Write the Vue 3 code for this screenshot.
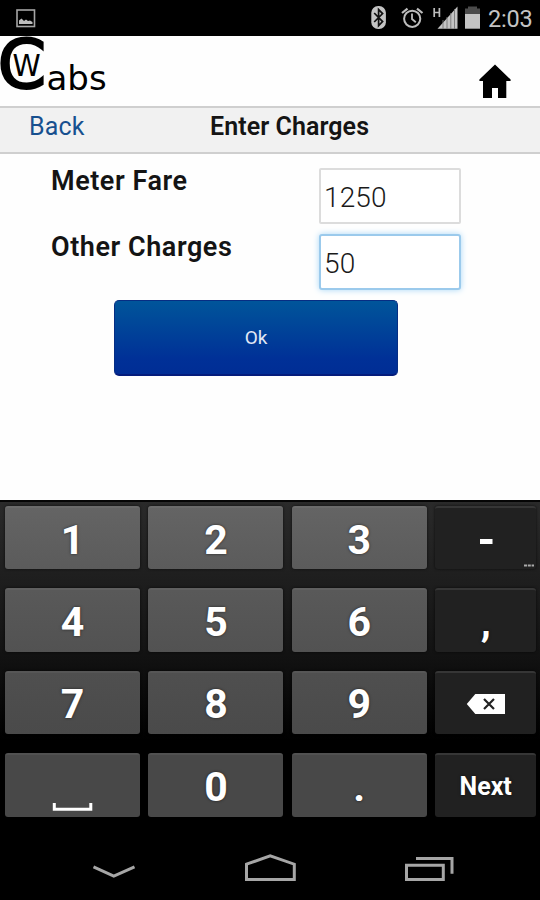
<script setup>
import { ref } from 'vue'

const meterFare = ref('1250')
const otherCharges = ref('50')

const rows = [
  ['1', '2', '3', '-'],
  ['4', '5', '6', ','],
  ['7', '8', '9', 'delete'],
  ['space', '0', '.', 'Next'],
]
</script>

<template>
  <div class="phone">
    <header class="status">
      <svg class="picture" width="20" height="19" viewBox="0 0 20 19">
        <rect x="1" y="1" width="17.5" height="16.5" fill="none" stroke="#a5a5a5" stroke-width="1.6" />
        <path d="M3 15V11.5L5.5 9.5L8 12L10 10.5L12 12L14 11.5L16.5 13V15Z" fill="#bdbdbd" />
      </svg>
      <div class="indicators">
        <svg width="110" height="26" viewBox="370 5 110 26">
          <rect x="371.3" y="6" width="14.6" height="23" rx="6.8" fill="#c4c4c4" />
          <path d="M374.2 13L382.6 21.6L378.6 25.6V9.6L382.6 13.6L374.2 22" fill="none" stroke="#111" stroke-width="1.7" />
          <g fill="none" stroke="#bdbdbd">
            <circle cx="412.2" cy="18.8" r="8.1" stroke-width="2" />
            <path d="M412 13.5V19L415.8 22.3" stroke-width="1.8" />
            <path d="M402 13L407.5 8.6M417 8.6L422.5 13" stroke-width="2.2" />
          </g>
          <path d="M434.2 8V17M439.4 8V17M434 12.5H439.5" fill="none" stroke="#bdbdbd" stroke-width="1.7" />
          <path d="M437.5 28.7L457.5 6.5V28.7Z" fill="#c4c4c4" />
          <path d="M443 20V29M447 17V29M450.8 13V29M454.5 9V29" stroke="#777" stroke-width=".9" />
          <path d="M465 14V8.5H468V6.5H477V8.5H480V14Z" fill="#4b4b4b" />
          <rect x="465" y="14" width="15" height="14.7" fill="#c4c4c4" />
        </svg>
        <span class="clock">2:03</span>
      </div>
    </header>

    <div class="brand">
      <svg class="logo" width="120" height="70" viewBox="0 36 120 70">
        <text class="logo-c" transform="translate(-2.6 88.2) scale(1.03 1)">C</text>
        <text class="logo-w" transform="translate(12.6 75.8) scale(.92 1)">W</text>
        <text class="logo-abs" x="46.5" y="90">abs</text>
      </svg>
      <svg class="home" width="32" height="35" viewBox="0 0 32 35">
        <path d="M16 0.5L31.6 15.5V17H27.3V34H19V24H13V34H4V17H0.4V15.5Z" fill="#000" />
      </svg>
    </div>

    <nav class="bar">
      <a class="back">Back</a>
      <h1 class="title">Enter Charges</h1>
    </nav>

    <main class="form">
      <div class="field">
        <label class="label meter">Meter Fare</label>
        <div class="input">{{ meterFare }}</div>
      </div>
      <div class="field">
        <label class="label other">Other Charges</label>
        <div class="input focused">{{ otherCharges }}</div>
      </div>
      <button class="ok"><span>Ok</span></button>
    </main>

    <section class="keyboard">
      <div v-for="(row, r) in rows" :key="r" class="keys" :class="'row' + r">
        <div
          v-for="(key, c) in row"
          :key="key"
          class="key"
          :class="{ side: c === 3, next: key === 'Next' }"
        >
          <svg v-if="key === 'delete'" width="40" height="22" viewBox="0 0 40 22">
            <path d="M0.8 11L9.3 1H39V21H9.3Z" fill="#fff" />
            <path d="M18 6L28 16M28 6L18 16" stroke="#222" stroke-width="2.2" />
          </svg>
          <svg v-else-if="key === 'space'" class="space" width="42" height="10" viewBox="0 0 42 10">
            <path d="M2.3 1V7.3H38.8V1" fill="none" stroke="#fff" stroke-width="3" />
          </svg>
          <svg v-else-if="key === '-'" class="dash" width="50" height="28" viewBox="0 0 50 28">
            <rect x="0" y="0" width="12.5" height="5" fill="#fff" />
            <path d="M44 26.5H54" stroke="#aaa" stroke-width="2" stroke-dasharray="3 .8" />
          </svg>
          <span v-else>{{ key }}</span>
        </div>
      </div>
    </section>

    <footer class="system">
      <svg width="540" height="80" viewBox="0 820 540 80">
        <g fill="none" stroke="#a6a6a6" stroke-width="3">
          <path d="M93.5 866.8L113.8 876.2L134.5 866.8" />
          <path d="M246.5 864.2L270.2 855.8L294.3 864.2V879.4H246.5Z" />
          <path d="M406.5 865.2H443.3V879.4H406.5Z" />
          <path d="M416 858.5H452V873.8" />
        </g>
      </svg>
    </footer>
  </div>
</template>

<style>
body {
  margin: 0;
  background: #fff;
}
</style>

<style scoped>
.phone {
  width: 540px;
  height: 900px;
  display: flex;
  flex-direction: column;
  overflow: hidden;
  background: #fefefe;
  font-family: Roboto, sans-serif;
  color: #141414;
}
.status {
  height: 36px;
  flex: none;
  box-sizing: border-box;
  display: flex;
  justify-content: space-between;
  padding: 0 8px 0 16px;
  background: #000;
}
.picture {
  margin-top: 9px;
}
.indicators {
  display: flex;
  gap: 8px;
  padding-top: 5px;
}
.clock {
  width: 44px;
  font-size: 23.5px;
  line-height: 28px;
  letter-spacing: -0.2px;
  color: #c4c4c4;
  white-space: nowrap;
}
.brand {
  height: 70px;
  flex: none;
  display: flex;
  justify-content: space-between;
  padding-right: 29px;
}
.logo {
  overflow: visible;
}
.logo text {
  font-family: "DejaVu Sans", sans-serif;
  fill: #000;
}
.logo .logo-c {
  font-size: 68px;
  stroke: #000;
  stroke-width: 2;
}
.logo .logo-w {
  font-size: 31px;
}
.logo .logo-abs {
  font-size: 34px;
}
.home {
  margin-top: 27.5px;
}
.bar {
  height: 48px;
  flex: none;
  box-sizing: border-box;
  display: flex;
  align-items: flex-start;
  padding: 4px 0 0 29px;
  background: #f1f1f1;
  border-top: 2px solid #cfcfcf;
  border-bottom: 2px solid #cfcfcf;
}
.back {
  width: 181px;
  font-size: 25px;
  line-height: 29px;
  letter-spacing: 0.2px;
  color: #17508f;
}
.title {
  margin: 0;
  font-size: 25px;
  line-height: 29px;
  font-weight: 600;
  letter-spacing: 0.07px;
}
.form {
  height: 346px;
  flex: none;
  box-sizing: border-box;
  padding: 13.5px 79px 0 51px;
}
.field {
  height: 56px;
  display: flex;
  justify-content: space-between;
  margin-bottom: 10px;
}
.label {
  font-size: 27px;
  line-height: 26px;
  font-weight: 600;
  letter-spacing: 0.55px;
}
.input {
  width: 142px;
  height: 56px;
  box-sizing: border-box;
  padding-left: 3px;
  border: 2px solid #dcdcdc;
  border-radius: 2px;
  background: #fff;
  font-size: 28px;
  line-height: 55px;
  letter-spacing: 0.1px;
  font-weight: 300;
  color: #1a1a1a;
}
.focused {
  border-color: #9bcaec;
  box-shadow: 0 0 6px #a9d8f7;
  border-radius: 3px;
}
.ok {
  display: flex;
  align-items: center;
  justify-content: center;
  width: 284px;
  height: 76px;
  box-sizing: border-box;
  margin: 0 0 0 63px;
  padding: 0;
  border: 1px solid #062d83;
  border-bottom: 2px solid #041c7c;
  border-radius: 5px;
  background: linear-gradient(#00559a, #003097 80%, #002d95);
  font-family: inherit;
  font-size: 19px;
  color: #e0e8f5;
}
.keyboard {
  height: 320px;
  flex: none;
  box-sizing: border-box;
  display: flex;
  flex-direction: column;
  gap: 19px;
  padding: 4px 4px 0 5px;
  border-top: 2px solid #050505;
  background: linear-gradient(#2a2a2a, #141414 45%, #000 75%);
}
.keys {
  display: grid;
  grid-template-columns: 135px 135px 135px 101px;
  column-gap: 8.4px;
}
.key {
  height: 63.4px;
  box-sizing: border-box;
  display: flex;
  align-items: center;
  justify-content: center;
  border-top: 2px solid #6b6b6b;
  border-radius: 3px;
  box-shadow: 0 0 3px rgba(0, 0, 0, 0.7);
  font-size: 41px;
  line-height: 48px;
  font-weight: 700;
  color: #fff;
  text-shadow: 0 0 3px rgba(0, 0, 0, 0.6);
  padding-top: 2px;
}
.row0 .key {
  background: linear-gradient(#646464, #5b5b5b);
}
.row1 .key {
  background: linear-gradient(#595959, #525252);
  border-top-color: #606060;
}
.row2 .key {
  background: linear-gradient(#4f4f4f, #4a4a4a);
  border-top-color: #565656;
}
.row3 .key {
  background: #484848;
  border-top-color: #515151;
}
.keys .side {
  background: #212121;
  border-top-color: #363636;
}
.keys .next {
  font-size: 25px;
}
.space {
  align-self: flex-end;
  margin-bottom: 5px;
}
.dash {
  overflow: visible;
  margin: 26px 0 0 39px;
}
.system {
  height: 80px;
  flex: none;
  background: #000;
}
</style>
